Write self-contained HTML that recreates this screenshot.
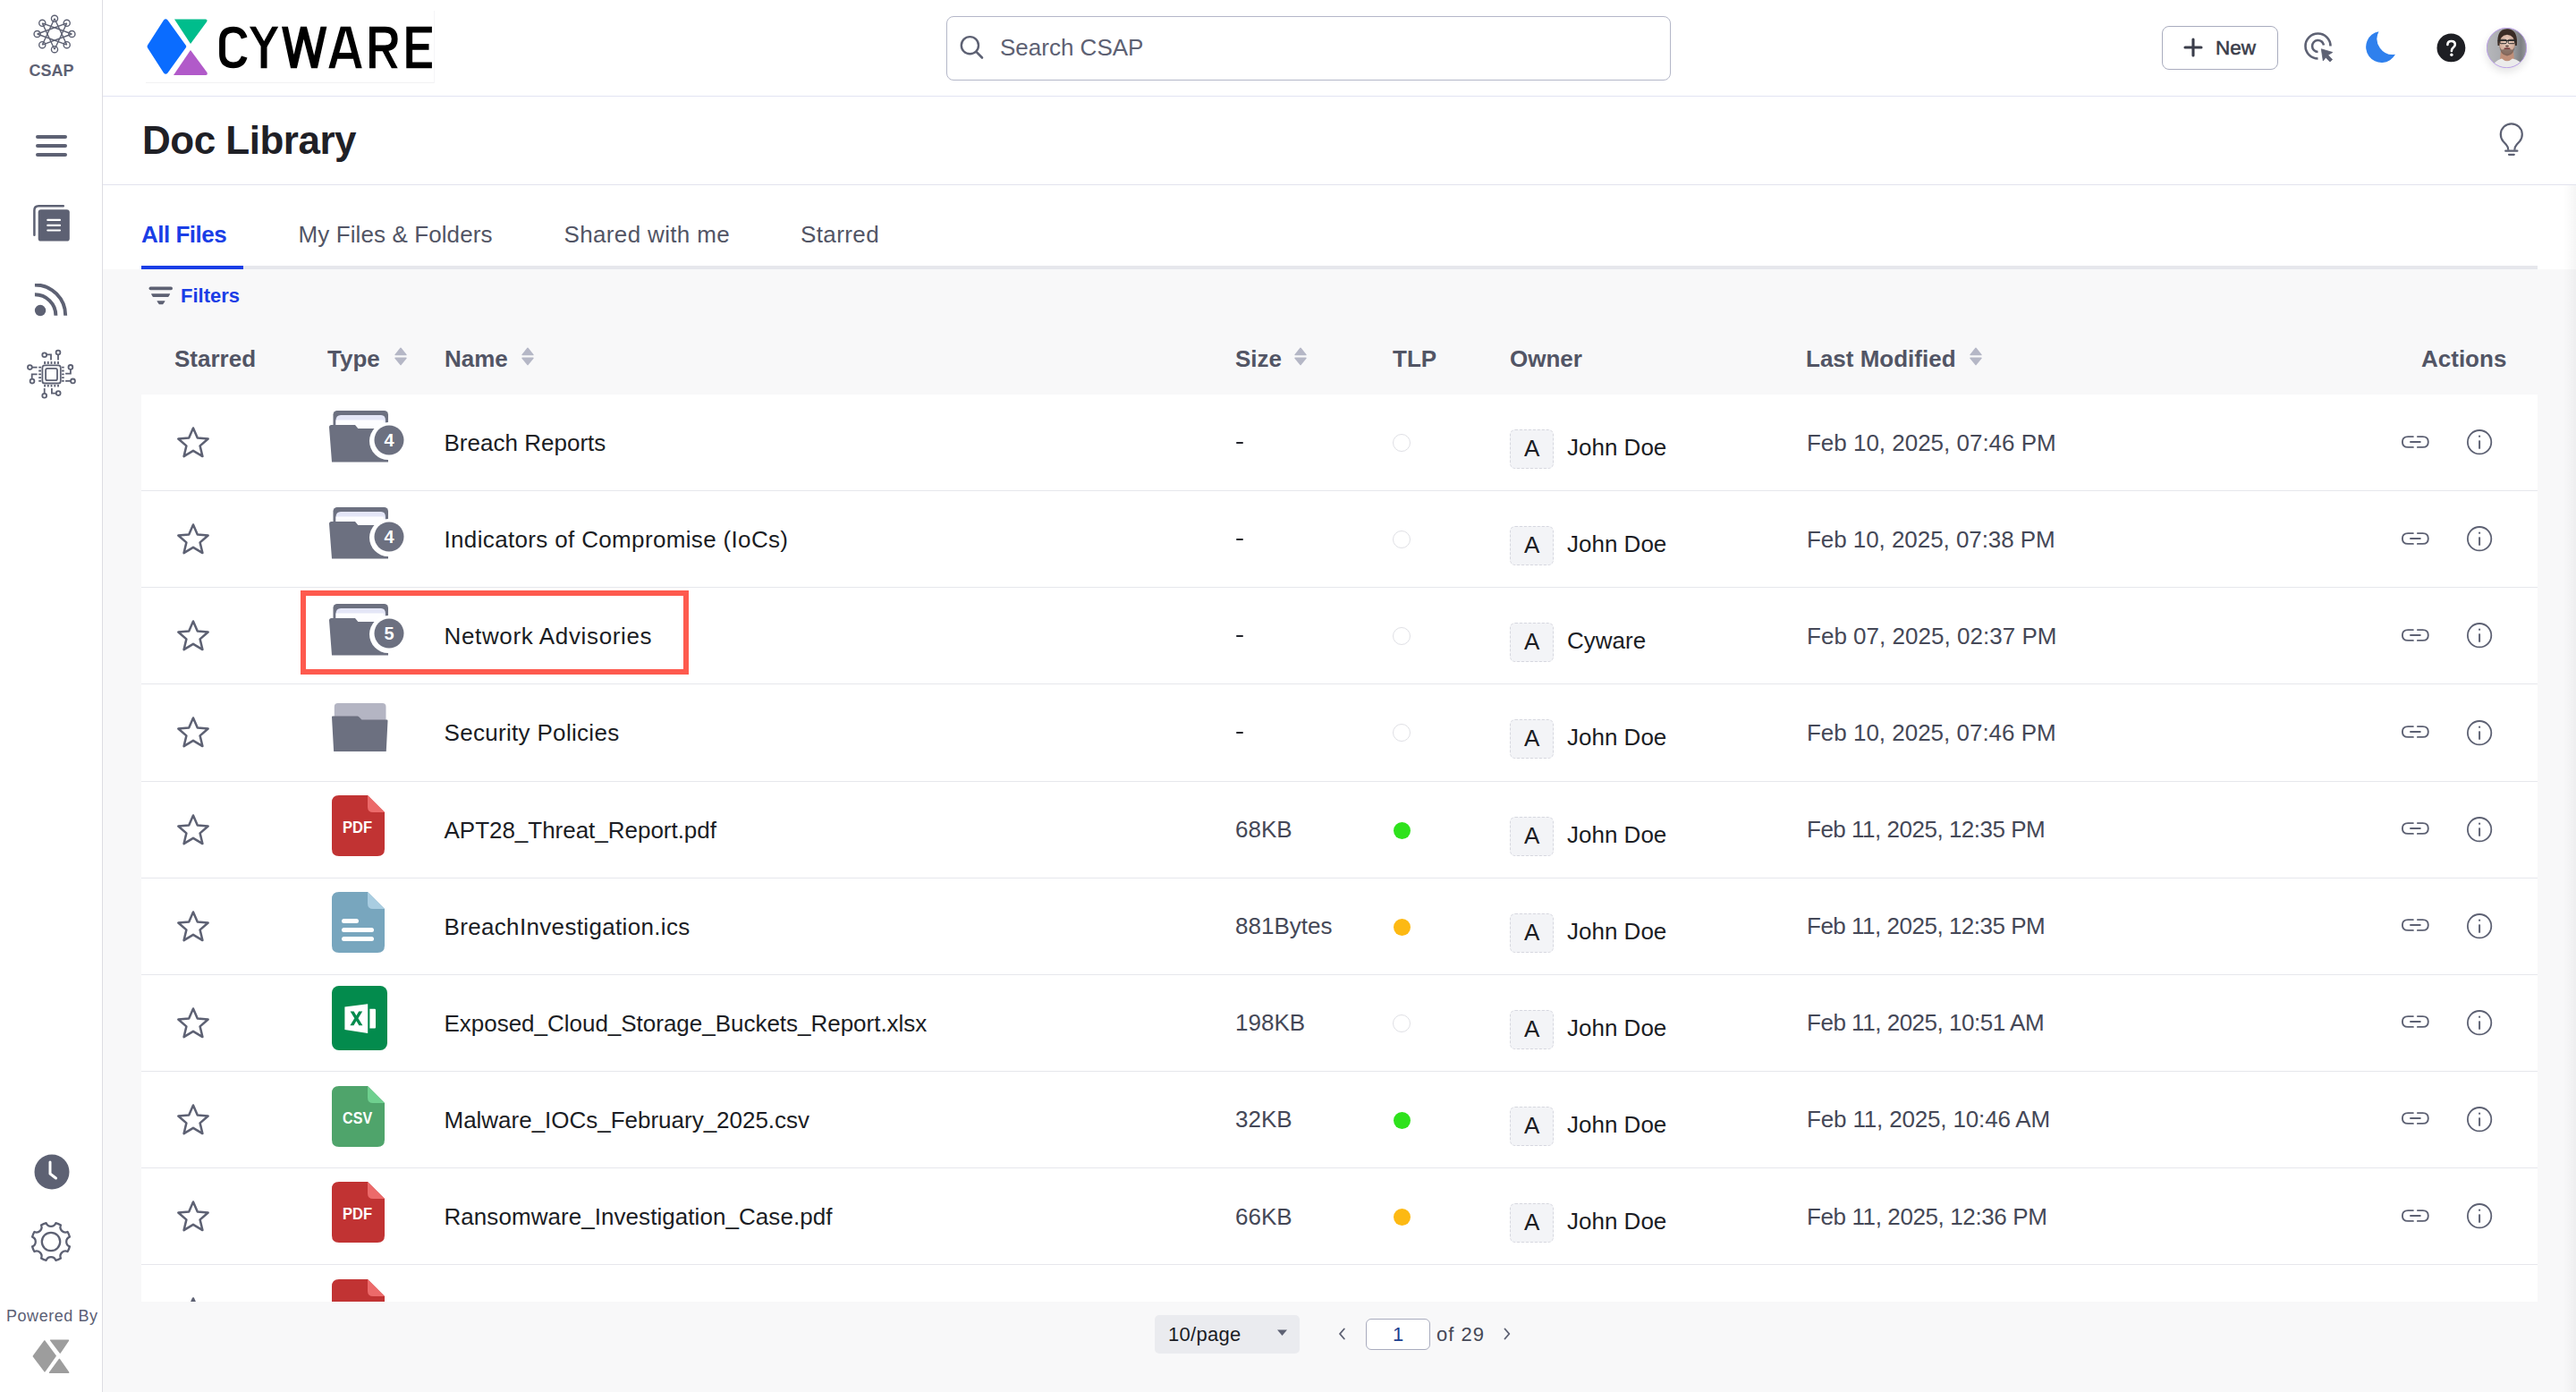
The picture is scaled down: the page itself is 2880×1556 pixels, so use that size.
<!DOCTYPE html>
<html><head><meta charset="utf-8"><title>Doc Library</title>
<style>
*{box-sizing:border-box;margin:0;padding:0}
html,body{width:2880px;height:1556px;overflow:hidden;background:#fff;font-family:"Liberation Sans",sans-serif;color:#1d1f26}
.abs{position:absolute}
#side{position:absolute;left:0;top:0;width:115px;height:1556px;border-right:1px solid #dddde3;background:#fff}
#hdr{position:absolute;left:115px;top:0;width:2765px;height:108px;border-bottom:1px solid #e2e4f3;background:#fff}
#ttl{position:absolute;left:115px;top:108px;width:2765px;height:99px;border-bottom:1px solid #e2e3ee;background:#fff}
#tabs{position:absolute;left:115px;top:207px;width:2765px;height:94px;background:#fff}
#gray{position:absolute;left:115px;top:301px;width:2765px;height:1255px;background:#f8f8f9}
.t{position:absolute;white-space:nowrap;line-height:1}
#tbody{position:absolute;left:158px;top:441px;width:2679px;height:1014px;background:#fff;overflow:hidden}
.row{position:absolute;left:0;width:2679px;height:108.125px;border-bottom:1px solid #e6e7ec}
.name{font-size:26px;color:#1b1d24}
.sz{font-size:26px;color:#454857}
.hd{font-size:26px;font-weight:bold;color:#525565}
.tab{font-size:26px;color:#525565}
</style></head>
<body>
<div id="side">
<svg class="abs" style="left:30.8px;top:8.2px" width="60" height="60" viewBox="0 0 60 60"><path d="M30.00 12.80 L43.72 42.16 M43.72 17.84 L30.00 47.20 M49.40 30.00 L16.28 42.16 M43.72 42.16 L10.60 30.00 M30.00 47.20 L16.28 17.84 M16.28 42.16 L30.00 12.80 M10.60 30.00 L43.72 17.84 M16.28 17.84 L49.40 30.00 " stroke="#5d6173" stroke-width="1.35" fill="none"/><circle cx="30.00" cy="12.80" r="3.55" fill="none" stroke="#5d6173" stroke-width="1.4"/><circle cx="43.72" cy="17.84" r="3.55" fill="none" stroke="#5d6173" stroke-width="1.4"/><circle cx="49.40" cy="30.00" r="3.55" fill="none" stroke="#5d6173" stroke-width="1.4"/><circle cx="43.72" cy="42.16" r="3.55" fill="none" stroke="#5d6173" stroke-width="1.4"/><circle cx="30.00" cy="47.20" r="3.55" fill="none" stroke="#5d6173" stroke-width="1.4"/><circle cx="16.28" cy="42.16" r="3.55" fill="none" stroke="#5d6173" stroke-width="1.4"/><circle cx="10.60" cy="30.00" r="3.55" fill="none" stroke="#5d6173" stroke-width="1.4"/><circle cx="16.28" cy="17.84" r="3.55" fill="none" stroke="#5d6173" stroke-width="1.4"/></svg>
<div class="t" style="left:0;width:115px;text-align:center;top:70px;font-size:18px;font-weight:bold;color:#5d6173">CSAP</div>
<div class="abs" style="left:40px;top:151px;width:35px;height:4px;border-radius:2px;background:#5d6173"></div>
<div class="abs" style="left:40px;top:161px;width:35px;height:4px;border-radius:2px;background:#5d6173"></div>
<div class="abs" style="left:40px;top:171px;width:35px;height:4px;border-radius:2px;background:#5d6173"></div>
<svg class="abs" style="left:36px;top:228px" width="44" height="44" viewBox="0 0 44 44">
 <path d="M2.4 34.8 L2.4 7 Q2.4 2.2 7.2 2.2 L34.8 2.2" fill="none" stroke="#5d6173" stroke-width="2.5" stroke-linecap="round"/>
 <rect x="6.7" y="6.2" width="35.1" height="35.4" rx="3.2" fill="#5d6173"/>
 <path d="M17.3 17.9 H31 M17.3 23.9 H31 M17.3 29.5 H31" stroke="#fff" stroke-width="2.2" stroke-linecap="round"/>
</svg>
<svg class="abs" style="left:37.5px;top:316.5px" width="38" height="38" viewBox="0 0 40.5 40.5">
 <circle cx="7.5" cy="32" r="6.6" fill="#5d6173"/>
 <path d="M1 13 A25 25 0 0 1 26 38" fill="none" stroke="#5d6173" stroke-width="4.2"/>
 <path d="M1 1.5 A36.5 36.5 0 0 1 37.5 38" fill="none" stroke="#5d6173" stroke-width="4.2"/>
</svg>
<svg class="abs" style="left:25px;top:385px" width="65" height="65" viewBox="0 0 65 65" fill="none" stroke="#5d6173" stroke-width="1.8">
 <rect x="22.4" y="23.3" width="20.4" height="20.2" rx="2.6"/>
 <rect x="26.1" y="26.8" width="12.9" height="13.4" rx="2"/>
 <path d="M25.1 19.1 V21.9 M28.8 19.1 V21.9 M32.5 19.1 V21.9 M36.3 19.1 V21.9 M40 19.1 V21.9 M25.1 45 V47.6 M28.8 45 V47.6 M32.5 45 V47.6 M36.3 45 V47.6 M40 45 V47.6 M18.2 25.7 H21 M18.2 29.5 H21 M18.2 33.3 H21 M18.2 37.1 H21 M18.2 40.9 H21 M44.1 25.7 H46.7 M44.1 29.5 H46.7 M44.1 33.3 H46.7 M44.1 37.1 H46.7 M44.1 40.9 H46.7"/>
 <path d="M32 17.5 V11.4 H27 M40 17.5 V11.4 M16.6 25.6 H10.7 M16.6 33.4 H10.7 V38.8 M48.1 32.7 H53.9 V27.7 M48.1 40.9 H54.2 M24.7 49 V54.8 M32.9 49 V54.6 H37.9"/>
 <circle cx="24.7" cy="11.7" r="2.4"/><circle cx="40" cy="9.1" r="2.4"/><circle cx="8.4" cy="25.6" r="2.4"/><circle cx="11" cy="41.1" r="2.4"/><circle cx="53.9" cy="25.4" r="2.4"/><circle cx="56.5" cy="40.9" r="2.4"/><circle cx="24.7" cy="57.2" r="2.4"/><circle cx="40.2" cy="54.6" r="2.4"/>
</svg>
<svg class="abs" style="left:38px;top:1290px" width="40" height="40" viewBox="0 0 40 40">
 <circle cx="20" cy="20" r="19.5" fill="#5d6173"/>
 <path d="M18 9 V22 L24.5 27" fill="none" stroke="#fff" stroke-width="3" stroke-linecap="round" stroke-linejoin="round"/>
</svg>
<svg class="abs" style="left:32px;top:1363px" width="50" height="50" viewBox="0 0 50 50">
 <path d="M19.59 4.09 A5.8 5.8 0 0 0 30.41 4.09 A21.6 21.6 0 0 1 35.96 6.39 A5.8 5.8 0 0 0 43.61 14.04 A21.6 21.6 0 0 1 45.91 19.59 A5.8 5.8 0 0 0 45.91 30.41 A21.6 21.6 0 0 1 43.61 35.96 A5.8 5.8 0 0 0 35.96 43.61 A21.6 21.6 0 0 1 30.41 45.91 A5.8 5.8 0 0 0 19.59 45.91 A21.6 21.6 0 0 1 14.04 43.61 A5.8 5.8 0 0 0 6.39 35.96 A21.6 21.6 0 0 1 4.09 30.41 A5.8 5.8 0 0 0 4.09 19.59 A21.6 21.6 0 0 1 6.39 14.04 A5.8 5.8 0 0 0 14.04 6.39 A21.6 21.6 0 0 1 19.59 4.09 Z" fill="none" stroke="#5d6173" stroke-width="2.3" stroke-linejoin="round"/>
 <circle cx="25" cy="25" r="10.2" fill="none" stroke="#5d6173" stroke-width="2.3"/>
</svg>
<div class="t" style="left:7px;top:1462px;font-size:18px;letter-spacing:0.55px;color:#5b6075">Powered By</div>
<svg class="abs" style="left:36px;top:1496px" width="44" height="42" viewBox="0 0 44 42">
 <g fill="#9d9d9d" stroke="#9d9d9d" stroke-width="1.4" stroke-linejoin="round">
 <path d="M1.3 20 L13.8 2.9 L26.2 19.7 L14 36.9 Z"/>
 <path d="M20.6 2.1 L40.5 2.3 L31.2 16.2 Z"/>
 <path d="M30.4 23.4 L40.7 38.2 L19.5 38.4 Z"/>
 </g>
</svg>
</div>
<div id="hdr">
 <svg class="abs" style="left:49px;top:20px" width="72" height="66" viewBox="0 0 72 66">
  <path d="M19 2.5 Q21.3 0 23.5 2.5 L44 31 Q44.5 32 44 33 L23.5 61.5 Q21.3 64 19 61.5 L1 33.5 Q0 32 1 30.5 Z" fill="#0a6cff"/>
  <path d="M31 1.5 L66 1.5 Q68.5 2 67 4.5 L49 29 Z" fill="#00bd8c"/>
  <path d="M49 36 L67.5 61 Q68.5 64 66 64 L30 64 Z" fill="#b15ac9"/>
 </svg>
 <svg class="abs" style="left:0px;top:0px" width="400" height="100" viewBox="115 0 400 100">
  <path d="M279 29.7 L285.90 29.7 L298.90 52.5 L292 52.5 Z M304.3 29.7 L311.20 29.7 L298.50 52.5 L291.6 52.5 Z M291.6 48 H298.5 V76.2 H291.6 Z M315 29.7 L321.90 29.7 L331.90 76.2 L325 76.2 Z M336 29.7 L342.90 29.7 L331.90 76.2 L325 76.2 Z M336 29.7 L342.90 29.7 L354.90 76.2 L348 76.2 Z M358.5 29.7 L365.40 29.7 L354.90 76.2 L348 76.2 Z M380.8 29.7 L387.70 29.7 L374.30 76.2 L367.4 76.2 Z M385.2 29.7 L392.10 29.7 L404.70 76.2 L397.8 76.2 Z M372.5 58.9 H399.5 V65.7 H372.5 Z M426 54 L432.90 54 L444.70 76.2 L437.8 76.2 Z " fill="#000"/>
  <g fill="none" stroke="#000" stroke-width="6.8">
  <path d="M273.2 42.5 Q270.5 33.1 261 33.1 Q248.5 33.1 248.5 46 L248.5 60 Q248.5 72.8 261 72.8 Q270.5 72.8 273.2 63.5"/>
  <path d="M416.4 76.2 V33.1 H430.5 Q441.2 33.1 441.2 43.5 Q441.2 53.8 430.5 53.8 H416.4"/>
  <path d="M482.9 33.1 H457.7 V72.8 H482.9 M457.7 52.4 H479.5"/>
  </g>
 </svg>
 <div class="abs" style="left:943px;top:18px;width:810px;height:72px;border:1.5px solid #b4b7c8;border-radius:8px"></div>
 <svg class="abs" style="left:958px;top:36px" width="30" height="32" viewBox="0 0 30 32"><circle cx="11.4" cy="14.7" r="9.6" fill="none" stroke="#5d6173" stroke-width="2.4"/><path d="M18.5 21.8 L25 28.5" stroke="#5d6173" stroke-width="2.6" stroke-linecap="round"/></svg>
 <div class="t" style="left:1003px;top:40px;font-size:26px;color:#5d6173">Search CSAP</div>
 <div class="abs" style="left:2302px;top:29px;width:130px;height:49px;border:1.5px solid #a9acbe;border-radius:8px"></div>
 <svg class="abs" style="left:2324.5px;top:41px" width="24" height="24" viewBox="0 0 24 24"><path d="M12 3 V20.9 M3 11.95 H21" stroke="#3a3d4a" stroke-width="3.1" stroke-linecap="round"/></svg>
 <div class="t" style="left:2362px;top:42.5px;font-size:22.5px;-webkit-text-stroke:0.55px #3a3d4a;color:#3a3d4a">New</div>

 <svg class="abs" style="left:2457px;top:32px" width="40" height="40" viewBox="0 0 40 40">
  <path d="M33.5 19.5 A14 14 0 1 0 19.5 33.5" fill="none" stroke="#5d6173" stroke-width="2.6"/>
  <path d="M26 18.5 A6.5 6.5 0 1 0 19.5 26" fill="none" stroke="#5d6173" stroke-width="2.6"/>
  <path d="M23.3 22.8 L35.8 26.5 L30.8 29.6 L35.6 34.5 L33 37 L28.2 32.2 L25.3 36 Z" fill="#5d6173" stroke="#5d6173" stroke-width="0.8" stroke-linejoin="round"/>
 </svg>
 <svg class="abs" style="left:2525px;top:30px" width="44" height="46" viewBox="0 0 44 46">
  <path d="M19.5 5.2 A17.5 17.5 0 1 0 38 30.8 A17.7 17.7 0 0 1 19.5 5.2 Z" fill="#2f80ed"/>
 </svg>
 <svg class="abs" style="left:2609px;top:37px" width="34" height="34" viewBox="0 0 34 34">
  <circle cx="16.4" cy="16.4" r="15.9" fill="#1e1f24"/>
  <path d="M12.4 13 Q12.4 9 16.6 9 Q20.8 9 20.8 12.8 Q20.8 15 18.6 16.4 Q16.9 17.5 16.9 20" fill="none" stroke="#fff" stroke-width="2.6" stroke-linecap="round"/>
  <circle cx="16.9" cy="24.3" r="1.7" fill="#fff"/>
 </svg>
 <div class="abs" style="left:2665px;top:31px;width:45px;height:45px;border-radius:50%;box-shadow:0 4px 10px rgba(0,0,0,0.12)"></div>
 <svg class="abs" style="left:2665px;top:31px" width="45" height="45" viewBox="0 0 45 45">
  <defs><clipPath id="av"><circle cx="22.5" cy="22.5" r="22.3"/></clipPath>
  <linearGradient id="avbg" x1="0" y1="0" x2="1" y2="0"><stop offset="0" stop-color="#b6b7bb"/><stop offset="0.6" stop-color="#a3a5a9"/><stop offset="0.85" stop-color="#7d7f83"/><stop offset="1" stop-color="#9a9ca0"/></linearGradient>
  <radialGradient id="face" cx="0.5" cy="0.45" r="0.6"><stop offset="0" stop-color="#efd6c8"/><stop offset="1" stop-color="#c9a08c"/></radialGradient></defs>
  <g clip-path="url(#av)">
   <rect width="45" height="45" fill="url(#avbg)"/>
   <path d="M16 26 L30 26 L31.5 40 L14.5 40 Z" fill="#c0907a"/>
   <path d="M5 45 Q9 37 17 34.5 Q23 40 29 34.5 Q38 36 42 45 Z" fill="#ebebeb"/>
   <ellipse cx="23" cy="17.5" rx="9" ry="12" fill="url(#face)"/>
   <path d="M14.3 18 Q14.5 30.5 23 31.5 Q31.5 30.5 31.7 18 Q30.5 25.5 28 24.5 Q23 22.5 18 24.5 Q15.5 25.5 14.3 18 Z" fill="#5a4a42" opacity="0.6"/>
   <path d="M12.6 20 Q10.5 1.5 23 1.2 Q35.5 1.5 33.8 20 L31.8 20 Q32 8.5 23 7.8 Q14.2 8.5 14.4 20 Z" fill="#3a2c25"/>
   <path d="M12.8 14.4 H33.4" stroke="#2a2a2a" stroke-width="1.1"/>
   <rect x="15" y="13.3" width="7.3" height="4.4" rx="1.2" fill="none" stroke="#2c2c2c" stroke-width="1"/>
   <rect x="24.2" y="13.3" width="7.3" height="4.4" rx="1.2" fill="none" stroke="#2c2c2c" stroke-width="1"/>
   <ellipse cx="23" cy="20.6" rx="2" ry="1.1" fill="#3a2520" opacity="0.75"/>
   <ellipse cx="23" cy="23.2" rx="3.6" ry="0.9" fill="#6b2a2f" opacity="0.85"/>
  </g>
  <circle cx="22.5" cy="22.5" r="22.2" fill="none" stroke="#b99be9" stroke-width="0.9"/>
 </svg>
</div>
<div id="ttl">
 <svg class="abs" style="left:2673px;top:23px" width="40" height="46" viewBox="0 0 40 46">
  <path d="M16.3 36.8 Q16.3 33 13.8 30.4 L10.6 27 A12 12 0 1 1 29 27 L25.8 30.4 Q23.3 33 23.3 36.8" fill="none" stroke="#5d6173" stroke-width="2.2" stroke-linejoin="round"/>
  <path d="M13.2 37.7 H26.4 M17 41.8 H22.8" stroke="#5d6173" stroke-width="2.2" stroke-linecap="round"/>
 </svg>
 <div class="t" style="left:44px;top:27px;font-size:44px;letter-spacing:-0.5px;font-weight:bold;color:#1f2026">Doc Library</div>
</div>
<div id="tabs">
 <div class="t tab" style="left:43px;top:42px;font-weight:bold;letter-spacing:-0.5px;color:#1a3ee6">All Files</div>
 <div class="t tab" style="left:218.5px;top:42px;letter-spacing:0.1px">My Files &amp; Folders</div>
 <div class="t tab" style="left:515.5px;top:42px;letter-spacing:0.35px">Shared with me</div>
 <div class="t tab" style="left:780px;top:42px;letter-spacing:0.4px">Starred</div>
 <div class="abs" style="left:43px;top:90px;width:2679px;height:4px;background:#e6e7ec"></div>
 <div class="abs" style="left:43px;top:90px;width:114px;height:4px;background:#1a3ee6"></div>
</div>
<div id="gray">
 <svg class="abs" style="left:50px;top:18px" width="30" height="24" viewBox="0 0 30 24"><rect x="1.5" y="1.6" width="26.5" height="3.6" rx="1.8" fill="#5d6173"/><path d="M4.6 9.3 L24.6 9.3 Q25.4 9.3 25 10 L23.6 12.6 Q23.3 13 22.8 13 L6.4 13 Q5.9 13 5.6 12.6 L4.2 10 Q3.8 9.3 4.6 9.3 Z M11 17.3 L19 17.3 Q19.8 17.3 19.4 18 L17.3 21 Q17 21.3 16.6 21.3 L13.4 21.3 Q13 21.3 12.7 21 L10.6 18 Q10.2 17.3 11 17.3 Z" fill="#5d6173"/></svg>
 <div class="t" style="left:87px;top:19px;font-size:22px;font-weight:bold;color:#1a3ee6">Filters</div>
 <div class="t hd" style="left:80px;top:87px">Starred</div>
 <div class="t hd" style="left:251px;top:87px">Type</div>
 <div class="t hd" style="left:382px;top:87px">Name</div>
 <div class="t hd" style="left:1266px;top:87px">Size</div>
 <div class="t hd" style="left:1442px;top:87px">TLP</div>
 <div class="t hd" style="left:1573px;top:87px">Owner</div>
 <div class="t hd" style="left:1904px;top:87px">Last Modified</div>
 <div class="t hd" style="left:2592px;top:87px">Actions</div>
 <svg class="abs" style="left:325px;top:86px" width="16" height="22" viewBox="0 0 16 22"><path d="M8 2.2 L14 9.6 L2 9.6 Z M8 20.6 L14 13.2 L2 13.2 Z" fill="#b5b7c6" stroke="#b5b7c6" stroke-width="1.4" stroke-linejoin="round"/></svg>
 <svg class="abs" style="left:467px;top:86px" width="16" height="22" viewBox="0 0 16 22"><path d="M8 2.2 L14 9.6 L2 9.6 Z M8 20.6 L14 13.2 L2 13.2 Z" fill="#b5b7c6" stroke="#b5b7c6" stroke-width="1.4" stroke-linejoin="round"/></svg>
 <svg class="abs" style="left:1331px;top:86px" width="16" height="22" viewBox="0 0 16 22"><path d="M8 2.2 L14 9.6 L2 9.6 Z M8 20.6 L14 13.2 L2 13.2 Z" fill="#b5b7c6" stroke="#b5b7c6" stroke-width="1.4" stroke-linejoin="round"/></svg>
 <svg class="abs" style="left:2085.5px;top:86px" width="16" height="22" viewBox="0 0 16 22"><path d="M8 2.2 L14 9.6 L2 9.6 Z M8 20.6 L14 13.2 L2 13.2 Z" fill="#b5b7c6" stroke="#b5b7c6" stroke-width="1.4" stroke-linejoin="round"/></svg>
 <div class="abs" style="left:1176px;top:1169px;width:162px;height:43px;border-radius:5px;background:#eaebef"></div>
 <div class="t" style="left:1191px;top:1179.5px;font-size:22px;letter-spacing:0.3px;color:#1b1d24">10/page</div>
 <svg class="abs" style="left:1312px;top:1184px" width="14" height="10" viewBox="0 0 14 10"><path d="M1 1.5 L12 1.5 L6.5 8 Z" fill="#5d6173"/></svg>
 <svg class="abs" style="left:1377px;top:1179px" width="16" height="22" viewBox="0 0 16 22"><path d="M10.8 5.5 L6 11 L10.8 16.5" fill="none" stroke="#5d6173" stroke-width="1.9" stroke-linecap="round" stroke-linejoin="round"/></svg>
 <div class="abs" style="left:1412px;top:1173px;width:72px;height:35px;border:1.5px solid #a9acbe;border-radius:6px;background:#fff"></div>
 <div class="t" style="left:1412px;width:72px;text-align:center;top:1179.5px;font-size:22px;color:#1d3f8f">1</div>
 <div class="t" style="left:1491px;top:1179.5px;font-size:22px;letter-spacing:1px;color:#454857">of 29</div>
 <svg class="abs" style="left:1562px;top:1179px" width="16" height="22" viewBox="0 0 16 22"><path d="M5.5 5.5 L10.3 11 L5.5 16.5" fill="none" stroke="#5d6173" stroke-width="1.9" stroke-linecap="round" stroke-linejoin="round"/></svg>
</div>
<div id="tbody">
<div class="row" style="top:0.0px"><svg class="abs" style="left:38px;top:35px" width="40" height="40" viewBox="0.8 1.1 38.4 38.4"><path d="M20 3.5 L24.6 14 L36 15 L27.3 22.6 L30 33.8 L20 27.8 L10 33.8 L12.7 22.6 L4 15 L15.4 14 Z" fill="none" stroke="#5d6173" stroke-width="2.4" stroke-linejoin="round"/></svg><svg class="abs" style="left:210px;top:18px" width="90" height="62" viewBox="0 0 90 62"><rect x="4.5" y="0" width="61.5" height="40" rx="4.5" fill="#6c7080"/><path d="M7.5 11 Q7.5 5 13 5 L58 5 Q63 5 63 11 L63 20 L7.5 20 Z" fill="#e4e6f7"/><path d="M7.5 10.5 L61 10.5 L63 20 L7.5 20 Z" fill="#fdfdff"/><path d="M0 18.5 Q0 16 2.5 16 L29 16 L34 22 L66 22 L66 57.5 L3 57.5 Z" fill="#6c7080"/><circle cx="66" cy="34" r="21" fill="#fff"/><circle cx="67" cy="33" r="16.5" fill="#6c7080"/><text x="67" y="40" text-anchor="middle" font-family="Liberation Sans" font-weight="bold" font-size="20" fill="#fff">4</text></svg><div class="t name" style="left:338.5px;top:41px;letter-spacing:0.015px">Breach Reports</div><div class="abs" style="left:1224px;top:52.9px;width:8.3px;height:2.2px;border-radius:1px;background:#22242c"></div><div class="abs" style="left:1399.2px;top:44px;width:20px;height:20px;border-radius:50%;border:1.3px solid #dfe0e5"></div><div class="abs" style="left:1530px;top:39px;width:49px;height:44px;border-radius:6px;border:1.3px dashed #d6d7df;background:#f3f4f7"></div><div class="t name" style="left:1546px;top:47px;font-size:26px">A</div><div class="t name" style="left:1594px;top:46px">John Doe</div><div class="t sz" style="left:1862px;top:40.5px;letter-spacing:-0.014px">Feb 10, 2025, 07:46 PM</div><svg class="abs" style="left:2526px;top:44.5px" width="33" height="16" viewBox="0 0 33 16"><path d="M13.9 2.1 H8.2 Q1.9 2.1 1.9 8 Q1.9 13.9 8.2 13.9 H13.9 M18.9 2.1 H24.7 Q30.8 2.1 30.8 8 Q30.8 13.9 24.7 13.9 H18.9 M11 8 H21.8" fill="none" stroke="#5d6173" stroke-width="1.9" stroke-linecap="round"/></svg><svg class="abs" style="left:2597px;top:36.2px" width="34" height="34" viewBox="0 0 34 34"><circle cx="17.1" cy="17.2" r="13.2" fill="none" stroke="#5d6173" stroke-width="1.8"/><rect x="16.1" y="9.7" width="2" height="2" fill="#5d6173"/><rect x="16.1" y="15.3" width="2" height="9.5" rx="0.6" fill="#5d6173"/></svg></div><div class="row" style="top:108.125px"><svg class="abs" style="left:38px;top:35px" width="40" height="40" viewBox="0.8 1.1 38.4 38.4"><path d="M20 3.5 L24.6 14 L36 15 L27.3 22.6 L30 33.8 L20 27.8 L10 33.8 L12.7 22.6 L4 15 L15.4 14 Z" fill="none" stroke="#5d6173" stroke-width="2.4" stroke-linejoin="round"/></svg><svg class="abs" style="left:210px;top:18px" width="90" height="62" viewBox="0 0 90 62"><rect x="4.5" y="0" width="61.5" height="40" rx="4.5" fill="#6c7080"/><path d="M7.5 11 Q7.5 5 13 5 L58 5 Q63 5 63 11 L63 20 L7.5 20 Z" fill="#e4e6f7"/><path d="M7.5 10.5 L61 10.5 L63 20 L7.5 20 Z" fill="#fdfdff"/><path d="M0 18.5 Q0 16 2.5 16 L29 16 L34 22 L66 22 L66 57.5 L3 57.5 Z" fill="#6c7080"/><circle cx="66" cy="34" r="21" fill="#fff"/><circle cx="67" cy="33" r="16.5" fill="#6c7080"/><text x="67" y="40" text-anchor="middle" font-family="Liberation Sans" font-weight="bold" font-size="20" fill="#fff">4</text></svg><div class="t name" style="left:338.5px;top:41px;letter-spacing:0.343px">Indicators of Compromise (IoCs)</div><div class="abs" style="left:1224px;top:52.9px;width:8.3px;height:2.2px;border-radius:1px;background:#22242c"></div><div class="abs" style="left:1399.2px;top:44px;width:20px;height:20px;border-radius:50%;border:1.3px solid #dfe0e5"></div><div class="abs" style="left:1530px;top:39px;width:49px;height:44px;border-radius:6px;border:1.3px dashed #d6d7df;background:#f3f4f7"></div><div class="t name" style="left:1546px;top:47px;font-size:26px">A</div><div class="t name" style="left:1594px;top:46px">John Doe</div><div class="t sz" style="left:1862px;top:40.5px;letter-spacing:-0.057px">Feb 10, 2025, 07:38 PM</div><svg class="abs" style="left:2526px;top:44.5px" width="33" height="16" viewBox="0 0 33 16"><path d="M13.9 2.1 H8.2 Q1.9 2.1 1.9 8 Q1.9 13.9 8.2 13.9 H13.9 M18.9 2.1 H24.7 Q30.8 2.1 30.8 8 Q30.8 13.9 24.7 13.9 H18.9 M11 8 H21.8" fill="none" stroke="#5d6173" stroke-width="1.9" stroke-linecap="round"/></svg><svg class="abs" style="left:2597px;top:36.2px" width="34" height="34" viewBox="0 0 34 34"><circle cx="17.1" cy="17.2" r="13.2" fill="none" stroke="#5d6173" stroke-width="1.8"/><rect x="16.1" y="9.7" width="2" height="2" fill="#5d6173"/><rect x="16.1" y="15.3" width="2" height="9.5" rx="0.6" fill="#5d6173"/></svg></div><div class="row" style="top:216.25px"><svg class="abs" style="left:38px;top:35px" width="40" height="40" viewBox="0.8 1.1 38.4 38.4"><path d="M20 3.5 L24.6 14 L36 15 L27.3 22.6 L30 33.8 L20 27.8 L10 33.8 L12.7 22.6 L4 15 L15.4 14 Z" fill="none" stroke="#5d6173" stroke-width="2.4" stroke-linejoin="round"/></svg><svg class="abs" style="left:210px;top:18px" width="90" height="62" viewBox="0 0 90 62"><rect x="4.5" y="0" width="61.5" height="40" rx="4.5" fill="#6c7080"/><path d="M7.5 11 Q7.5 5 13 5 L58 5 Q63 5 63 11 L63 20 L7.5 20 Z" fill="#e4e6f7"/><path d="M7.5 10.5 L61 10.5 L63 20 L7.5 20 Z" fill="#fdfdff"/><path d="M0 18.5 Q0 16 2.5 16 L29 16 L34 22 L66 22 L66 57.5 L3 57.5 Z" fill="#6c7080"/><circle cx="66" cy="34" r="21" fill="#fff"/><circle cx="67" cy="33" r="16.5" fill="#6c7080"/><text x="67" y="40" text-anchor="middle" font-family="Liberation Sans" font-weight="bold" font-size="20" fill="#fff">5</text></svg><div class="t name" style="left:338.5px;top:41px;letter-spacing:0.647px">Network Advisories</div><div class="abs" style="left:1224px;top:52.9px;width:8.3px;height:2.2px;border-radius:1px;background:#22242c"></div><div class="abs" style="left:1399.2px;top:44px;width:20px;height:20px;border-radius:50%;border:1.3px solid #dfe0e5"></div><div class="abs" style="left:1530px;top:39px;width:49px;height:44px;border-radius:6px;border:1.3px dashed #d6d7df;background:#f3f4f7"></div><div class="t name" style="left:1546px;top:47px;font-size:26px">A</div><div class="t name" style="left:1594px;top:46px">Cyware</div><div class="t sz" style="left:1862px;top:40.5px;letter-spacing:0.024px">Feb 07, 2025, 02:37 PM</div><svg class="abs" style="left:2526px;top:44.5px" width="33" height="16" viewBox="0 0 33 16"><path d="M13.9 2.1 H8.2 Q1.9 2.1 1.9 8 Q1.9 13.9 8.2 13.9 H13.9 M18.9 2.1 H24.7 Q30.8 2.1 30.8 8 Q30.8 13.9 24.7 13.9 H18.9 M11 8 H21.8" fill="none" stroke="#5d6173" stroke-width="1.9" stroke-linecap="round"/></svg><svg class="abs" style="left:2597px;top:36.2px" width="34" height="34" viewBox="0 0 34 34"><circle cx="17.1" cy="17.2" r="13.2" fill="none" stroke="#5d6173" stroke-width="1.8"/><rect x="16.1" y="9.7" width="2" height="2" fill="#5d6173"/><rect x="16.1" y="15.3" width="2" height="9.5" rx="0.6" fill="#5d6173"/></svg></div><div class="row" style="top:324.375px"><svg class="abs" style="left:38px;top:35px" width="40" height="40" viewBox="0.8 1.1 38.4 38.4"><path d="M20 3.5 L24.6 14 L36 15 L27.3 22.6 L30 33.8 L20 27.8 L10 33.8 L12.7 22.6 L4 15 L15.4 14 Z" fill="none" stroke="#5d6173" stroke-width="2.4" stroke-linejoin="round"/></svg><svg class="abs" style="left:213px;top:21px" width="66" height="58" viewBox="0 0 66 58"><rect x="2.8" y="0" width="57.7" height="40" rx="4" fill="#b4b5c3"/><path d="M0 15.5 Q0 14.5 1 14.5 L28.5 14.5 Q29.5 14.5 30.2 15.2 L33.5 18.5 L61.5 18.5 Q62.5 18.5 62.5 19.7 L60.8 53.5 Q60.7 54 60.2 54 L2.6 54 Q2.2 54 2.1 53.5 Z" fill="#6c7080"/></svg><div class="t name" style="left:338.5px;top:41px;letter-spacing:0.312px">Security Policies</div><div class="abs" style="left:1224px;top:52.9px;width:8.3px;height:2.2px;border-radius:1px;background:#22242c"></div><div class="abs" style="left:1399.2px;top:44px;width:20px;height:20px;border-radius:50%;border:1.3px solid #dfe0e5"></div><div class="abs" style="left:1530px;top:39px;width:49px;height:44px;border-radius:6px;border:1.3px dashed #d6d7df;background:#f3f4f7"></div><div class="t name" style="left:1546px;top:47px;font-size:26px">A</div><div class="t name" style="left:1594px;top:46px">John Doe</div><div class="t sz" style="left:1862px;top:40.5px;letter-spacing:-0.014px">Feb 10, 2025, 07:46 PM</div><svg class="abs" style="left:2526px;top:44.5px" width="33" height="16" viewBox="0 0 33 16"><path d="M13.9 2.1 H8.2 Q1.9 2.1 1.9 8 Q1.9 13.9 8.2 13.9 H13.9 M18.9 2.1 H24.7 Q30.8 2.1 30.8 8 Q30.8 13.9 24.7 13.9 H18.9 M11 8 H21.8" fill="none" stroke="#5d6173" stroke-width="1.9" stroke-linecap="round"/></svg><svg class="abs" style="left:2597px;top:36.2px" width="34" height="34" viewBox="0 0 34 34"><circle cx="17.1" cy="17.2" r="13.2" fill="none" stroke="#5d6173" stroke-width="1.8"/><rect x="16.1" y="9.7" width="2" height="2" fill="#5d6173"/><rect x="16.1" y="15.3" width="2" height="9.5" rx="0.6" fill="#5d6173"/></svg></div><div class="row" style="top:432.5px"><svg class="abs" style="left:38px;top:35px" width="40" height="40" viewBox="0.8 1.1 38.4 38.4"><path d="M20 3.5 L24.6 14 L36 15 L27.3 22.6 L30 33.8 L20 27.8 L10 33.8 L12.7 22.6 L4 15 L15.4 14 Z" fill="none" stroke="#5d6173" stroke-width="2.4" stroke-linejoin="round"/></svg><svg class="abs" style="left:213px;top:15.4px" width="60" height="70" viewBox="0 0 60 70"><path d="M8 0 L40 0 L59 19 L59 60 Q59 68 51 68 L8 68 Q0 68 0 60 L0 8 Q0 0 8 0 Z" fill="#c13333"/><path d="M40 0 L59 19 L46 19 Q40 19 40 13 Z" fill="#ec6a6a"/><text x="12.1" y="42.2" textLength="33" lengthAdjust="spacingAndGlyphs" font-family="Liberation Sans" font-weight="bold" font-size="17.6" fill="#fff">PDF</text></svg><div class="t name" style="left:338.5px;top:41px;letter-spacing:-0.023px">APT28_Threat_Report.pdf</div><div class="t sz" style="left:1223px;top:40.5px">68KB</div><div class="abs" style="left:1400px;top:45px;width:19px;height:19px;border-radius:50%;background:#2ee21c"></div><div class="abs" style="left:1530px;top:39px;width:49px;height:44px;border-radius:6px;border:1.3px dashed #d6d7df;background:#f3f4f7"></div><div class="t name" style="left:1546px;top:47px;font-size:26px">A</div><div class="t name" style="left:1594px;top:46px">John Doe</div><div class="t sz" style="left:1862px;top:40.5px;letter-spacing:-0.49px">Feb 11, 2025, 12:35 PM</div><svg class="abs" style="left:2526px;top:44.5px" width="33" height="16" viewBox="0 0 33 16"><path d="M13.9 2.1 H8.2 Q1.9 2.1 1.9 8 Q1.9 13.9 8.2 13.9 H13.9 M18.9 2.1 H24.7 Q30.8 2.1 30.8 8 Q30.8 13.9 24.7 13.9 H18.9 M11 8 H21.8" fill="none" stroke="#5d6173" stroke-width="1.9" stroke-linecap="round"/></svg><svg class="abs" style="left:2597px;top:36.2px" width="34" height="34" viewBox="0 0 34 34"><circle cx="17.1" cy="17.2" r="13.2" fill="none" stroke="#5d6173" stroke-width="1.8"/><rect x="16.1" y="9.7" width="2" height="2" fill="#5d6173"/><rect x="16.1" y="15.3" width="2" height="9.5" rx="0.6" fill="#5d6173"/></svg></div><div class="row" style="top:540.625px"><svg class="abs" style="left:38px;top:35px" width="40" height="40" viewBox="0.8 1.1 38.4 38.4"><path d="M20 3.5 L24.6 14 L36 15 L27.3 22.6 L30 33.8 L20 27.8 L10 33.8 L12.7 22.6 L4 15 L15.4 14 Z" fill="none" stroke="#5d6173" stroke-width="2.4" stroke-linejoin="round"/></svg><svg class="abs" style="left:213px;top:15.4px" width="60" height="70" viewBox="0 0 60 70"><path d="M8 0 L40 0 L59 19 L59 60 Q59 68 51 68 L8 68 Q0 68 0 60 L0 8 Q0 0 8 0 Z" fill="#78a6be"/><path d="M40 0 L59 19 L46 19 Q40 19 40 13 Z" fill="#a9cde1"/><rect x="11" y="30" width="19" height="5" rx="2.5" fill="#fff"/><rect x="11" y="40" width="36" height="5" rx="2.5" fill="#fff"/><rect x="11" y="50" width="36" height="5" rx="2.5" fill="#fff"/></svg><div class="t name" style="left:338.5px;top:41px;letter-spacing:0.336px">BreachInvestigation.ics</div><div class="t sz" style="left:1223px;top:40.5px">881Bytes</div><div class="abs" style="left:1400px;top:45px;width:19px;height:19px;border-radius:50%;background:#fdb913"></div><div class="abs" style="left:1530px;top:39px;width:49px;height:44px;border-radius:6px;border:1.3px dashed #d6d7df;background:#f3f4f7"></div><div class="t name" style="left:1546px;top:47px;font-size:26px">A</div><div class="t name" style="left:1594px;top:46px">John Doe</div><div class="t sz" style="left:1862px;top:40.5px;letter-spacing:-0.49px">Feb 11, 2025, 12:35 PM</div><svg class="abs" style="left:2526px;top:44.5px" width="33" height="16" viewBox="0 0 33 16"><path d="M13.9 2.1 H8.2 Q1.9 2.1 1.9 8 Q1.9 13.9 8.2 13.9 H13.9 M18.9 2.1 H24.7 Q30.8 2.1 30.8 8 Q30.8 13.9 24.7 13.9 H18.9 M11 8 H21.8" fill="none" stroke="#5d6173" stroke-width="1.9" stroke-linecap="round"/></svg><svg class="abs" style="left:2597px;top:36.2px" width="34" height="34" viewBox="0 0 34 34"><circle cx="17.1" cy="17.2" r="13.2" fill="none" stroke="#5d6173" stroke-width="1.8"/><rect x="16.1" y="9.7" width="2" height="2" fill="#5d6173"/><rect x="16.1" y="15.3" width="2" height="9.5" rx="0.6" fill="#5d6173"/></svg></div><div class="row" style="top:648.75px"><svg class="abs" style="left:38px;top:35px" width="40" height="40" viewBox="0.8 1.1 38.4 38.4"><path d="M20 3.5 L24.6 14 L36 15 L27.3 22.6 L30 33.8 L20 27.8 L10 33.8 L12.7 22.6 L4 15 L15.4 14 Z" fill="none" stroke="#5d6173" stroke-width="2.4" stroke-linejoin="round"/></svg><svg class="abs" style="left:212.8px;top:12.3px" width="62" height="72" viewBox="0 0 62 72"><rect x="0" y="0" width="62" height="72" rx="8" fill="#038b4d"/><path d="M14.4 23.4 L40.2 20.2 L40.2 52.9 L14.4 49.1 Z" fill="#fff"/><path d="M42.4 25.7 L48 25.7 Q49 25.7 49 26.7 L49 46.4 Q49 47.4 48 47.4 L42.4 47.4 Z" fill="#fff"/><path d="M20.6 28.4 L24.6 28.4 L27.4 33.2 L30.2 28.4 L34.2 28.4 L29.5 36.3 L34.4 44.2 L30.4 44.2 L27.4 39.2 L24.4 44.2 L20.4 44.2 L25.3 36.3 Z" fill="#038b4d"/></svg><div class="t name" style="left:338.5px;top:41px;letter-spacing:-0.018px">Exposed_Cloud_Storage_Buckets_Report.xlsx</div><div class="t sz" style="left:1223px;top:40.5px">198KB</div><div class="abs" style="left:1399.2px;top:44px;width:20px;height:20px;border-radius:50%;border:1.3px solid #dfe0e5"></div><div class="abs" style="left:1530px;top:39px;width:49px;height:44px;border-radius:6px;border:1.3px dashed #d6d7df;background:#f3f4f7"></div><div class="t name" style="left:1546px;top:47px;font-size:26px">A</div><div class="t name" style="left:1594px;top:46px">John Doe</div><div class="t sz" style="left:1862px;top:40.5px;letter-spacing:-0.476px">Feb 11, 2025, 10:51 AM</div><svg class="abs" style="left:2526px;top:44.5px" width="33" height="16" viewBox="0 0 33 16"><path d="M13.9 2.1 H8.2 Q1.9 2.1 1.9 8 Q1.9 13.9 8.2 13.9 H13.9 M18.9 2.1 H24.7 Q30.8 2.1 30.8 8 Q30.8 13.9 24.7 13.9 H18.9 M11 8 H21.8" fill="none" stroke="#5d6173" stroke-width="1.9" stroke-linecap="round"/></svg><svg class="abs" style="left:2597px;top:36.2px" width="34" height="34" viewBox="0 0 34 34"><circle cx="17.1" cy="17.2" r="13.2" fill="none" stroke="#5d6173" stroke-width="1.8"/><rect x="16.1" y="9.7" width="2" height="2" fill="#5d6173"/><rect x="16.1" y="15.3" width="2" height="9.5" rx="0.6" fill="#5d6173"/></svg></div><div class="row" style="top:756.875px"><svg class="abs" style="left:38px;top:35px" width="40" height="40" viewBox="0.8 1.1 38.4 38.4"><path d="M20 3.5 L24.6 14 L36 15 L27.3 22.6 L30 33.8 L20 27.8 L10 33.8 L12.7 22.6 L4 15 L15.4 14 Z" fill="none" stroke="#5d6173" stroke-width="2.4" stroke-linejoin="round"/></svg><svg class="abs" style="left:213px;top:16.2px" width="60" height="70" viewBox="0 0 60 70"><path d="M8 0 L40 0 L59 19 L59 60 Q59 68 51 68 L8 68 Q0 68 0 60 L0 8 Q0 0 8 0 Z" fill="#4fa46b"/><path d="M40 0 L59 19 L46 19 Q40 19 40 13 Z" fill="#6fd08f"/><text x="12.1" y="42.2" textLength="33" lengthAdjust="spacingAndGlyphs" font-family="Liberation Sans" font-weight="bold" font-size="17.6" fill="#fff">CSV</text></svg><div class="t name" style="left:338.5px;top:41px;letter-spacing:-0.014px">Malware_IOCs_February_2025.csv</div><div class="t sz" style="left:1223px;top:40.5px">32KB</div><div class="abs" style="left:1400px;top:45px;width:19px;height:19px;border-radius:50%;background:#2ee21c"></div><div class="abs" style="left:1530px;top:39px;width:49px;height:44px;border-radius:6px;border:1.3px dashed #d6d7df;background:#f3f4f7"></div><div class="t name" style="left:1546px;top:47px;font-size:26px">A</div><div class="t name" style="left:1594px;top:46px">John Doe</div><div class="t sz" style="left:1862px;top:40.5px;letter-spacing:-0.162px">Feb 11, 2025, 10:46 AM</div><svg class="abs" style="left:2526px;top:44.5px" width="33" height="16" viewBox="0 0 33 16"><path d="M13.9 2.1 H8.2 Q1.9 2.1 1.9 8 Q1.9 13.9 8.2 13.9 H13.9 M18.9 2.1 H24.7 Q30.8 2.1 30.8 8 Q30.8 13.9 24.7 13.9 H18.9 M11 8 H21.8" fill="none" stroke="#5d6173" stroke-width="1.9" stroke-linecap="round"/></svg><svg class="abs" style="left:2597px;top:36.2px" width="34" height="34" viewBox="0 0 34 34"><circle cx="17.1" cy="17.2" r="13.2" fill="none" stroke="#5d6173" stroke-width="1.8"/><rect x="16.1" y="9.7" width="2" height="2" fill="#5d6173"/><rect x="16.1" y="15.3" width="2" height="9.5" rx="0.6" fill="#5d6173"/></svg></div><div class="row" style="top:865.0px"><svg class="abs" style="left:38px;top:35px" width="40" height="40" viewBox="0.8 1.1 38.4 38.4"><path d="M20 3.5 L24.6 14 L36 15 L27.3 22.6 L30 33.8 L20 27.8 L10 33.8 L12.7 22.6 L4 15 L15.4 14 Z" fill="none" stroke="#5d6173" stroke-width="2.4" stroke-linejoin="round"/></svg><svg class="abs" style="left:213px;top:15.4px" width="60" height="70" viewBox="0 0 60 70"><path d="M8 0 L40 0 L59 19 L59 60 Q59 68 51 68 L8 68 Q0 68 0 60 L0 8 Q0 0 8 0 Z" fill="#c13333"/><path d="M40 0 L59 19 L46 19 Q40 19 40 13 Z" fill="#ec6a6a"/><text x="12.1" y="42.2" textLength="33" lengthAdjust="spacingAndGlyphs" font-family="Liberation Sans" font-weight="bold" font-size="17.6" fill="#fff">PDF</text></svg><div class="t name" style="left:338.5px;top:41px;letter-spacing:0.056px">Ransomware_Investigation_Case.pdf</div><div class="t sz" style="left:1223px;top:40.5px">66KB</div><div class="abs" style="left:1400px;top:45px;width:19px;height:19px;border-radius:50%;background:#fdb913"></div><div class="abs" style="left:1530px;top:39px;width:49px;height:44px;border-radius:6px;border:1.3px dashed #d6d7df;background:#f3f4f7"></div><div class="t name" style="left:1546px;top:47px;font-size:26px">A</div><div class="t name" style="left:1594px;top:46px">John Doe</div><div class="t sz" style="left:1862px;top:40.5px;letter-spacing:-0.39px">Feb 11, 2025, 12:36 PM</div><svg class="abs" style="left:2526px;top:44.5px" width="33" height="16" viewBox="0 0 33 16"><path d="M13.9 2.1 H8.2 Q1.9 2.1 1.9 8 Q1.9 13.9 8.2 13.9 H13.9 M18.9 2.1 H24.7 Q30.8 2.1 30.8 8 Q30.8 13.9 24.7 13.9 H18.9 M11 8 H21.8" fill="none" stroke="#5d6173" stroke-width="1.9" stroke-linecap="round"/></svg><svg class="abs" style="left:2597px;top:36.2px" width="34" height="34" viewBox="0 0 34 34"><circle cx="17.1" cy="17.2" r="13.2" fill="none" stroke="#5d6173" stroke-width="1.8"/><rect x="16.1" y="9.7" width="2" height="2" fill="#5d6173"/><rect x="16.1" y="15.3" width="2" height="9.5" rx="0.6" fill="#5d6173"/></svg></div><div class="row" style="top:973.125px"><svg class="abs" style="left:38px;top:35px" width="40" height="40" viewBox="0.8 1.1 38.4 38.4"><path d="M20 3.5 L24.6 14 L36 15 L27.3 22.6 L30 33.8 L20 27.8 L10 33.8 L12.7 22.6 L4 15 L15.4 14 Z" fill="none" stroke="#5d6173" stroke-width="2.4" stroke-linejoin="round"/></svg><svg class="abs" style="left:213px;top:15.4px" width="60" height="70" viewBox="0 0 60 70"><path d="M8 0 L40 0 L59 19 L59 60 Q59 68 51 68 L8 68 Q0 68 0 60 L0 8 Q0 0 8 0 Z" fill="#c13333"/><path d="M40 0 L59 19 L46 19 Q40 19 40 13 Z" fill="#ec6a6a"/><text x="12.1" y="42.2" textLength="33" lengthAdjust="spacingAndGlyphs" font-family="Liberation Sans" font-weight="bold" font-size="17.6" fill="#fff">PDF</text></svg></div>
</div>
<div class="abs" style="left:336px;top:660px;width:434px;height:94px;border:6px solid #fe5a4e"></div>
<div class="abs" style="left:2866px;top:207px;width:14px;height:1349px;background:linear-gradient(to right,rgba(0,0,0,0),rgba(0,0,0,0.04))"></div>
<div class="abs" style="left:163px;top:92px;width:323px;height:1px;background:#f1f1f3"></div>
<div class="abs" style="left:485px;top:12px;width:1px;height:81px;background:#f5f5f7"></div>
</body></html>
